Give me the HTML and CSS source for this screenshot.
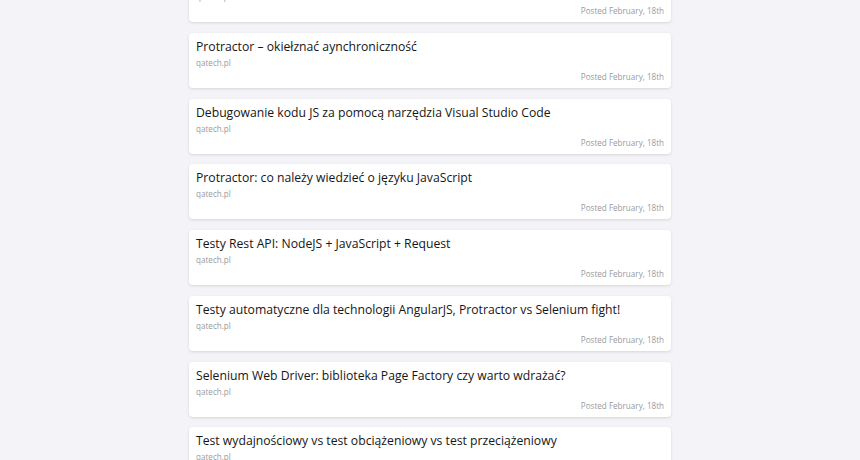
FILE: index.html
```html
<!DOCTYPE html>
<html lang="pl">
<head>
<meta charset="utf-8">
<link rel="stylesheet" href="styles.css">
</head>
<body>
<main class="list">
  <article class="card">
    <h2 class="title">Lorem artykuł testowy</h2>
    <div class="source">qatech.pl</div>
    <div class="date">Posted February, 18th</div>
  </article>
  <article class="card">
    <h2 class="title">Protractor – okiełznać aynchroniczność</h2>
    <div class="source">qatech.pl</div>
    <div class="date">Posted February, 18th</div>
  </article>
  <article class="card">
    <h2 class="title">Debugowanie kodu JS za pomocą narzędzia Visual Studio Code</h2>
    <div class="source">qatech.pl</div>
    <div class="date">Posted February, 18th</div>
  </article>
  <article class="card">
    <h2 class="title">Protractor: co należy wiedzieć o języku JavaScript</h2>
    <div class="source">qatech.pl</div>
    <div class="date">Posted February, 18th</div>
  </article>
  <article class="card">
    <h2 class="title">Testy Rest API: NodeJS + JavaScript + Request</h2>
    <div class="source">qatech.pl</div>
    <div class="date">Posted February, 18th</div>
  </article>
  <article class="card">
    <h2 class="title">Testy automatyczne dla technologii AngularJS, Protractor vs Selenium fight!</h2>
    <div class="source">qatech.pl</div>
    <div class="date">Posted February, 18th</div>
  </article>
  <article class="card">
    <h2 class="title">Selenium Web Driver: biblioteka Page Factory czy warto wdrażać?</h2>
    <div class="source">qatech.pl</div>
    <div class="date">Posted February, 18th</div>
  </article>
  <article class="card">
    <h2 class="title">Test wydajnościowy vs test obciążeniowy vs test przeciążeniowy</h2>
    <div class="source">qatech.pl</div>
    <div class="date">Posted February, 18th</div>
  </article>
</main>
</body>
</html>
```
FILE: styles.css
```css
html, body {
  margin: 0;
  padding: 0;
  background: #f4f4f8;
  font-family: "Open Sans", "Noto Sans", sans-serif;
  overflow: hidden;
}
.list {
  width: 482px;
  margin: -33px auto 0;
  display: flex;
  flex-direction: column;
  gap: 10.75px;
}
.card {
  background: #fff;
  border-radius: 4px;
  box-shadow: 0 1px 3px rgba(0, 0, 0, 0.12);
  padding: 5px 7px 5px;
  height: 45px;
  display: flex;
  flex-direction: column;
}
.title {
  margin: 0;
  font-size: 12.2px;
  font-weight: 400;
  line-height: 18px;
  color: #161616;
  white-space: nowrap;
}
.source {
  font-size: 8.1px;
  line-height: 13px;
  color: #9a9a9a;
}
.date {
  margin-top: auto;
  align-self: flex-end;
  font-size: 8.1px;
  line-height: 12px;
  color: #9a9a9a;
}
```
